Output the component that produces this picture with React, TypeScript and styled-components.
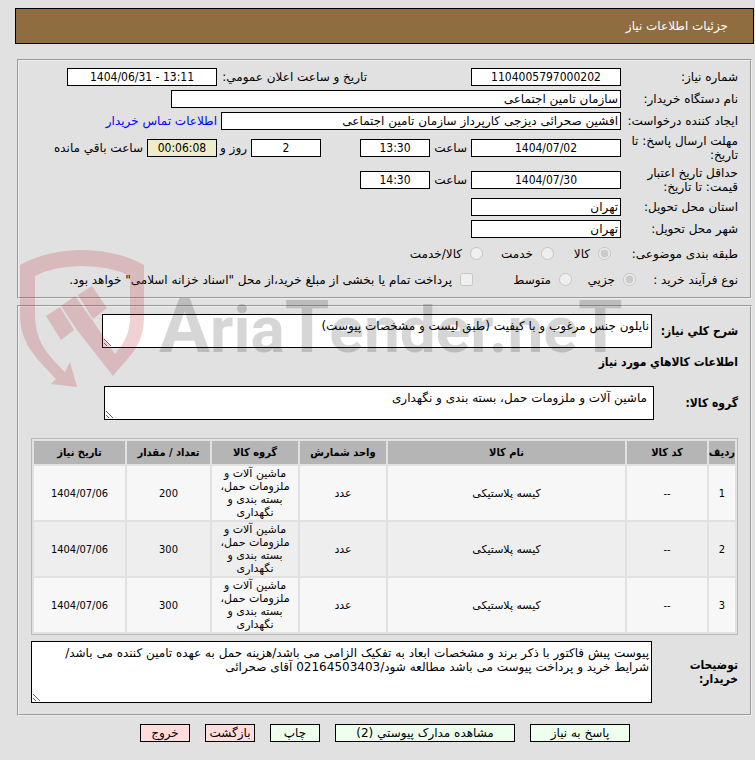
import React from 'react';
import styled, { createGlobalStyle, css } from 'styled-components';

const narrow = '"DejaVu Sans Condensed", "DejaVu Sans", sans-serif';

const Global = createGlobalStyle`
  * { box-sizing: border-box; }
  body {
    margin: 0;
    background: #e1e1e1;
    color: #000;
    font: 12px/14px "DejaVu Sans", sans-serif;
  }
  input, textarea, button { font: inherit; color: inherit; }
`;

const Page = styled.main`
  position: relative;
  padding: 8px 0 16px 15px;
`;

const Header = styled.h1`
  display: flex;
  align-items: center;
  height: 36px;
  margin: 0 1px 15px 0;
  padding: 0 25px;
  border: 1px solid #000;
  background: #8f6d41;
  color: #fff;
  font-size: 12px;
  font-weight: 400;
`;

const Panel = styled.section<{ $items?: boolean }>`
  margin: 0 3px 6px 2px;
  padding: ${(p) => (p.$items ? '7px 12px 11px 12px' : '5px 12px 5px 12px')};
  border: 2px groove #eee;
`;

const Row = styled.div<{ $h?: number }>`
  display: flex;
  align-items: center;
  min-height: ${(p) => p.$h ?? 22}px;
`;

const Label = styled.label`
  flex: none;
  width: 117px;
  padding-inline-end: 4px;
`;

const Inline = styled.label<{ $w?: number }>`
  flex: none;
  width: ${(p) => (p.$w ? `${p.$w}px` : 'auto')};
  padding-inline-start: 4px;
  white-space: nowrap;
`;

const Field = styled.input<{ $w: number; $center?: boolean; $timer?: boolean }>`
  flex: none;
  width: ${(p) => p.$w}px;
  height: 18px;
  padding: 0 2px;
  border: 1px solid #000;
  background: ${(p) => (p.$timer ? '#eeeccb' : '#fff')};
  text-align: ${(p) => (p.$center ? 'center' : 'start')};
  ${(p) => p.$center && css`font-family: ${narrow};`}
`;

const Gap = styled.span<{ $w: number }>`
  flex: none;
  width: ${(p) => p.$w}px;
`;

const GroupName = styled.span<{ $w: number }>`
  flex: none;
  width: ${(p) => p.$w}px;
  white-space: nowrap;
`;

const ContactLink = styled.a`
  padding-inline-start: 4px;
  color: #00f;
  text-decoration: none;
`;

const Choice = styled.label<{ $w?: number }>`
  display: flex;
  align-items: center;
  flex: none;
  gap: 8px;
  width: ${(p) => (p.$w ? `${p.$w}px` : 'auto')};
  white-space: nowrap;
  input { width: 13px; height: 13px; margin: 0; flex: none; }
`;

const boldLabel = css`
  font-family: ${narrow};
  font-weight: 700;
`;

const BigLabel = styled.label<{ $w?: number }>`
  ${boldLabel}
  flex: none;
  width: ${(p) => p.$w ?? 86}px;
`;

const SubTitle = styled.h2`
  ${boldLabel}
  margin: 0;
  padding: 7px 0 17px;
  font-size: 12px;
`;

const Area = styled.textarea<{ $w?: number; $h: number; $pad?: number }>`
  display: block;
  flex: ${(p) => (p.$w ? '0 1 auto' : '1 1 0')};
  min-width: 0;
  width: ${(p) => (p.$w ? `${p.$w}px` : 'auto')};
  height: ${(p) => p.$h}px;
  margin: 0;
  padding: 4px ${(p) => p.$pad ?? 2}px;
  border: 1px solid #000;
  background: #fff;
  line-height: 14px;
`;

const Items = styled.table`
  width: 100%;
  margin: 18px 0 6px;
  border: 1px solid #b9b9b9;
  border-spacing: 2px;
  table-layout: fixed;
  font-size: 11px;
  line-height: 13px;
  text-align: center;
  th { height: 23px; padding: 0; background: #b5b5b5; font-family: ${narrow}; white-space: nowrap; }
  td { height: 54px; padding: 1px 8px; background: #f7f7f7; }
  tbody tr:nth-child(even) td { background: #eee; }
`;

const NumCell = styled.td`
  font-family: ${narrow};
`;

const Col = styled.col<{ $w?: number }>`
  width: ${(p) => (p.$w ? `${p.$w}px` : 'auto')};
`;

const Actions = styled.nav`
  display: flex;
  justify-content: center;
  gap: 15px;
  padding-top: 2px;
`;

const Action = styled.button<{ $w: number; $leave?: boolean }>`
  width: ${(p) => p.$w}px;
  height: 18px;
  padding: 0;
  border: 1px solid #000;
  background: ${(p) => (p.$leave ? '#fdd' : '#efe')};
  line-height: 16px;
  white-space: nowrap;
`;

const Watermark = styled.svg`
  position: absolute;
  top: 245px;
  left: 15px;
  pointer-events: none;
`;

const rows = [
  { id: 1, qty: 200 },
  { id: 2, qty: 300 },
  { id: 3, qty: 300 },
];

export default function App() {
  return (
    <Page dir="rtl" lang="fa">
      <Global />
      <Header>جزئیات اطلاعات نیاز</Header>

      <Panel>
        <Row>
          <Label htmlFor="no">شماره نیاز:</Label>
          <Field id="no" $w={150} $center defaultValue="1104005797000202" />
          <Gap $w={100} />
          <Inline $w={154} htmlFor="pub">تاریخ و ساعت اعلان عمومي:</Inline>
          <Field id="pub" $w={150} $center dir="ltr" defaultValue="1404/06/31 - 13:11" />
        </Row>
        <Row>
          <Label htmlFor="org">نام دستگاه خریدار:</Label>
          <Field id="org" $w={450} defaultValue="سازمان تامین اجتماعی" />
        </Row>
        <Row>
          <Label htmlFor="creator">ایجاد کننده درخواست:</Label>
          <Field id="creator" $w={400} defaultValue="افشین صحرائی دیزجی کارپرداز سازمان تامین اجتماعی" />
          <ContactLink href="#contact">اطلاعات تماس خریدار</ContactLink>
        </Row>
        <Row $h={32}>
          <Label htmlFor="due">مهلت ارسال پاسخ: تا تاریخ:</Label>
          <Field id="due" $w={150} $center dir="ltr" defaultValue="1404/07/02" />
          <Inline $w={41} htmlFor="dueTime">ساعت</Inline>
          <Field id="dueTime" $w={70} $center dir="ltr" defaultValue="13:30" />
          <Gap $w={39} />
          <Field id="days" $w={70} $center defaultValue="2" />
          <Inline $w={34} htmlFor="days">روز و</Inline>
          <Field id="timer" $w={70} $center $timer dir="ltr" defaultValue="00:06:08" />
          <Inline htmlFor="timer">ساعت باقي مانده</Inline>
        </Row>
        <Row $h={32}>
          <Label htmlFor="valid">حداقل تاریخ اعتبار قیمت: تا تاریخ:</Label>
          <Field id="valid" $w={150} $center dir="ltr" defaultValue="1404/07/30" />
          <Inline $w={41} htmlFor="validTime">ساعت</Inline>
          <Field id="validTime" $w={70} $center dir="ltr" defaultValue="14:30" />
        </Row>
        <Row>
          <Label htmlFor="province">استان محل تحویل:</Label>
          <Field id="province" $w={150} defaultValue="تهران" />
        </Row>
        <Row>
          <Label htmlFor="city">شهر محل تحویل:</Label>
          <Field id="city" $w={150} defaultValue="تهران" />
        </Row>
        <Row $h={27}>
          <GroupName $w={127}>طبقه بندی موضوعی:</GroupName>
          <Choice $w={57}><input type="radio" name="kind" disabled defaultChecked />کالا</Choice>
          <Choice $w={71}><input type="radio" name="kind" disabled />خدمت</Choice>
          <Choice><input type="radio" name="kind" disabled />کالا/خدمت</Choice>
        </Row>
        <Row $h={25}>
          <GroupName $w={102}>نوع فرآیند خرید :</GroupName>
          <Choice $w={64}><input type="radio" name="process" disabled defaultChecked />جزیي</Choice>
          <Choice $w={99}><input type="radio" name="process" disabled />متوسط</Choice>
          <Choice><input type="checkbox" disabled />پرداخت تمام یا بخشی از مبلغ خرید،از محل "اسناد خزانه اسلامی" خواهد بود.</Choice>
        </Row>
      </Panel>

      <Panel $items>
        <Row>
          <BigLabel htmlFor="desc">شرح کلي نیاز:</BigLabel>
          <Area id="desc" $w={550} $h={34} defaultValue="نایلون جنس مرغوب و با کیفیت (طبق لیست و مشخصات پیوست)" />
        </Row>
        <SubTitle>اطلاعات کالاهاي مورد نیاز</SubTitle>
        <Row>
          <BigLabel $w={84} htmlFor="group">گروه کالا:</BigLabel>
          <Area id="group" $w={550} $h={34} $pad={6} defaultValue="ماشین آلات و ملزومات حمل، بسته بندی و نگهداری" />
        </Row>
        <Items>
          <colgroup>
            <Col $w={26} /><Col $w={80} /><Col /><Col $w={86} /><Col $w={86} /><Col $w={83} /><Col $w={91} />
          </colgroup>
          <thead>
            <tr>
              <th>ردیف</th><th>کد کالا</th><th>نام کالا</th><th>واحد شمارش</th>
              <th>گروه کالا</th><th>تعداد / مقدار</th><th>تاریخ نیاز</th>
            </tr>
          </thead>
          <tbody>
            {rows.map((r) => (
              <tr key={r.id}>
                <NumCell>{r.id}</NumCell>
                <NumCell>--</NumCell>
                <td>کیسه پلاستیکی</td>
                <td>عدد</td>
                <td>ماشین آلات و ملزومات حمل، بسته بندی و نگهداری</td>
                <NumCell>{r.qty}</NumCell>
                <NumCell>1404/07/06</NumCell>
              </tr>
            ))}
          </tbody>
        </Items>
        <Row>
          <BigLabel htmlFor="notes">توضیحات خریدار:</BigLabel>
          <Area id="notes" $h={62} defaultValue={'پیوست پیش فاکتور با ذکر برند و مشخصات ابعاد به تفکیک الزامی می باشد/هزینه حمل به عهده تامین کننده می باشد/\nشرایط خرید و پرداخت پیوست می باشد مطالعه شود/02164503403 آقای صحرائی'} />
        </Row>
      </Panel>

      <Actions>
        <Action $w={100}>پاسخ به نیاز</Action>
        <Action $w={180}>مشاهده مدارک پیوستي (2)</Action>
        <Action $w={50}>چاپ</Action>
        <Action $w={50} $leave>بازگشت</Action>
        <Action $w={50} $leave>خروج</Action>
      </Actions>

      <Watermark width="610" height="145" viewBox="15 245 610 145" direction="ltr" aria-hidden="true">
        <g fill="#b81c28" fillOpacity="0.2">
          <path d="M20 265Q47 250 82 250Q117 250 144 265V315C144 345 133 352 113 376L77 330L61 306L75 296L93 321L115 354C125 342 130 333 130 315V276Q110 266 82 266Q54 266 35 276V315C35 343 50 357 65 372L70 362L77 387L51 384L56 379C36 358 20 343 20 315Z" />
          <path d="M78 295L92 286L107 308L93 319Z" />
          <path d="M46 316L60 307L74 330L61 340Z" />
        </g>
        <text x="159" y="352" fill="#000" fillOpacity="0.16" fontFamily="Roboto, sans-serif" fontWeight="700" fontSize="64">
          <tspan fontSize="76">A</tspan>ria<tspan fontSize="72">T</tspan>ender.ne<tspan fontSize="72">T</tspan>
        </text>
      </Watermark>
    </Page>
  );
}
